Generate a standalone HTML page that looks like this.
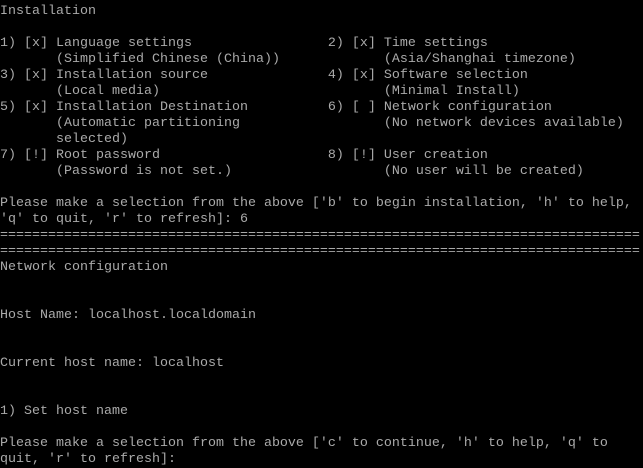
<!DOCTYPE html>
<html><head><style>
html,body{margin:0;padding:0;background:#000;width:643px;height:464px;overflow:hidden}
pre{margin:0;position:absolute;left:0;top:4px;font-family:"Liberation Mono",monospace;font-size:13.33px;line-height:16px;color:#aaaaaa;letter-spacing:0}
</style></head><body><pre>Installation

1) [x] Language settings                 2) [x] Time settings
       (Simplified Chinese (China))             (Asia/Shanghai timezone)
3) [x] Installation source               4) [x] Software selection
       (Local media)                            (Minimal Install)
5) [x] Installation Destination          6) [ ] Network configuration
       (Automatic partitioning                  (No network devices available)
       selected)
7) [!] Root password                     8) [!] User creation
       (Password is not set.)                   (No user will be created)

Please make a selection from the above ['b' to begin installation, 'h' to help,
'q' to quit, 'r' to refresh]: 6
================================================================================
================================================================================
Network configuration


Host Name: localhost.localdomain


Current host name: localhost


1) Set host name

Please make a selection from the above ['c' to continue, 'h' to help, 'q' to
quit, 'r' to refresh]:
</pre></body></html>
